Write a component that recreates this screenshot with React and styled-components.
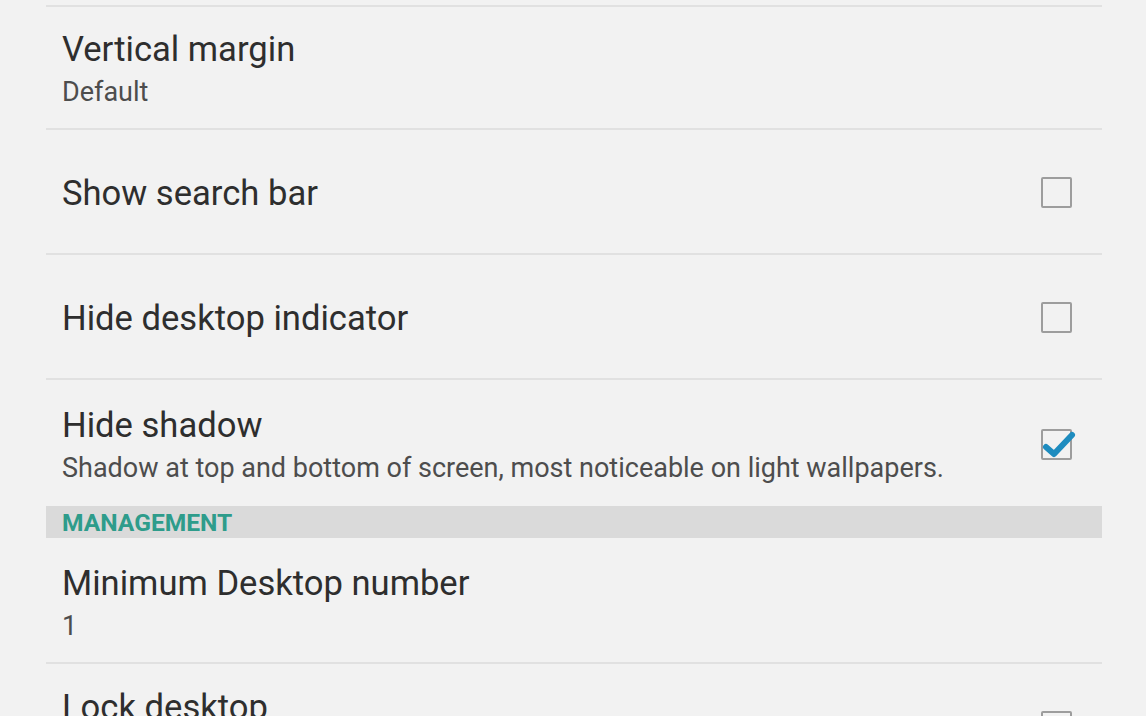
import React from "react";
import styled, { createGlobalStyle } from "styled-components";

const Global = createGlobalStyle`
  html, body { margin: 0; padding: 0; background: #f2f2f2; }
  body { font-family: Roboto, "Noto Sans", "Liberation Sans", sans-serif; overflow: hidden; }
`;

const Page = styled.div`
  width: 1146px;
  height: 716px;
  overflow: hidden;
  background: #f2f2f2;
`;

const List = styled.div`
  margin: 5px 44px 0 46px;
  display: flex;
  flex-direction: column;
`;

const Row = styled.div`
  box-sizing: border-box;
  min-height: ${(p) => p.$h}px;
  border-top: 2px solid #e1e1e1;
  padding: 2px 30px 0 16px;
  display: flex;
  align-items: center;
  gap: 20px;
  ${(p) => p.$noBorder && "border-top-color: transparent;"}
`;

const Texts = styled.div`
  flex: 1;
  display: flex;
  flex-direction: column;
  gap: 7px;
  min-width: 0;
`;

const Title = styled.div`
  font-size: 34.6px;
  line-height: 40px;
  color: #2e2e2e;
  white-space: nowrap;
`;

const Summary = styled.div`
  font-size: 27px;
  line-height: 32px;
  color: #4d4d4d;
  white-space: nowrap;
`;

const Header = styled.div`
  box-sizing: border-box;
  height: 32px;
  background: #dadada;
  padding: 1px 16px 0;
  font-size: 24.6px;
  line-height: 31px;
  font-weight: 700;
  color: #2e9c8b;
`;

const BoxWrap = styled.div`
  position: relative;
  width: 31px;
  height: 31px;
  flex: none;
`;

const Box = styled.div`
  box-sizing: border-box;
  width: 31px;
  height: 31px;
  border: 2.5px solid #9d9d9d;
  border-radius: 2px;
`;

const Check = styled.svg`
  position: absolute;
  left: 0;
  top: -6px;
  width: 40px;
  height: 40px;
  overflow: visible;
`;

function CheckBox({ checked }) {
  return (
    <BoxWrap>
      <Box />
      {checked && (
        <Check viewBox="0 0 40 40">
          <path
            d="M5 24 L13 31 L31 12"
            fill="none"
            stroke="#1e8cbf"
            strokeWidth="6"
            strokeLinecap="round"
            strokeLinejoin="round"
          />
        </Check>
      )}
    </BoxWrap>
  );
}

function Pref({ title, summary, check, h = 125, noBorder }) {
  return (
    <Row $h={h} $noBorder={noBorder}>
      <Texts>
        <Title>{title}</Title>
        {summary && <Summary>{summary}</Summary>}
      </Texts>
      {check !== undefined && <CheckBox checked={check} />}
    </Row>
  );
}

export default function App() {
  return (
    <Page>
      <Global />
      <List>
        <Pref title="Vertical margin" summary="Default" h={123} />
        <Pref title="Show search bar" check={false} />
        <Pref title="Hide desktop indicator" check={false} />
        <Pref
          title="Hide shadow"
          summary="Shadow at top and bottom of screen, most noticeable on light wallpapers."
          check={true}
          h={128}
        />
        <Header>MANAGEMENT</Header>
        <Pref title="Minimum Desktop number" summary="1" h={124} noBorder />
        <Pref title="Lock desktop" summary="Prevent changes to the desktop" check={false} />
      </List>
    </Page>
  );
}
